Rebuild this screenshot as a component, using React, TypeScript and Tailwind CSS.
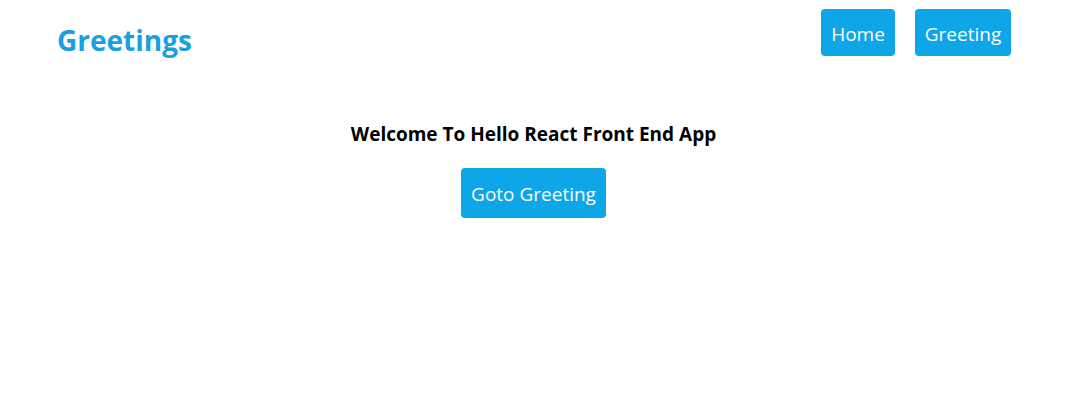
export default function App() {
  const font = { fontFamily: '"Open Sans", "Noto Sans", sans-serif' };
  return (
    <div className="min-h-[407px] bg-white" style={font}>
      <header className="flex items-start justify-between px-[57px]">
        <h1 className="mt-[21px] text-[28px] font-bold leading-[38px] text-[#1a9fe3]">Greetings</h1>
        <nav className="mt-[9px] flex gap-[20px]">
          <button className="h-[47px] w-[74px] rounded-[4px] bg-[#0ea5e9] pt-[3px] text-[19px] text-white">Home</button>
          <button className="h-[47px] w-[96px] rounded-[4px] bg-[#0ea5e9] pt-[3px] text-[19px] text-white">Greeting</button>
        </nav>
      </header>
      <main className="mt-[62px] flex flex-col items-center pr-[1px]">
        <h2 className="text-[19px] font-bold leading-[26px] text-black">Welcome To Hello React Front End App</h2>
        <button className="mt-[21px] h-[50px] w-[145px] rounded-[4px] bg-[#0ea5e9] pt-[2px] text-[19px] text-white">Goto Greeting</button>
      </main>
    </div>
  );
}
